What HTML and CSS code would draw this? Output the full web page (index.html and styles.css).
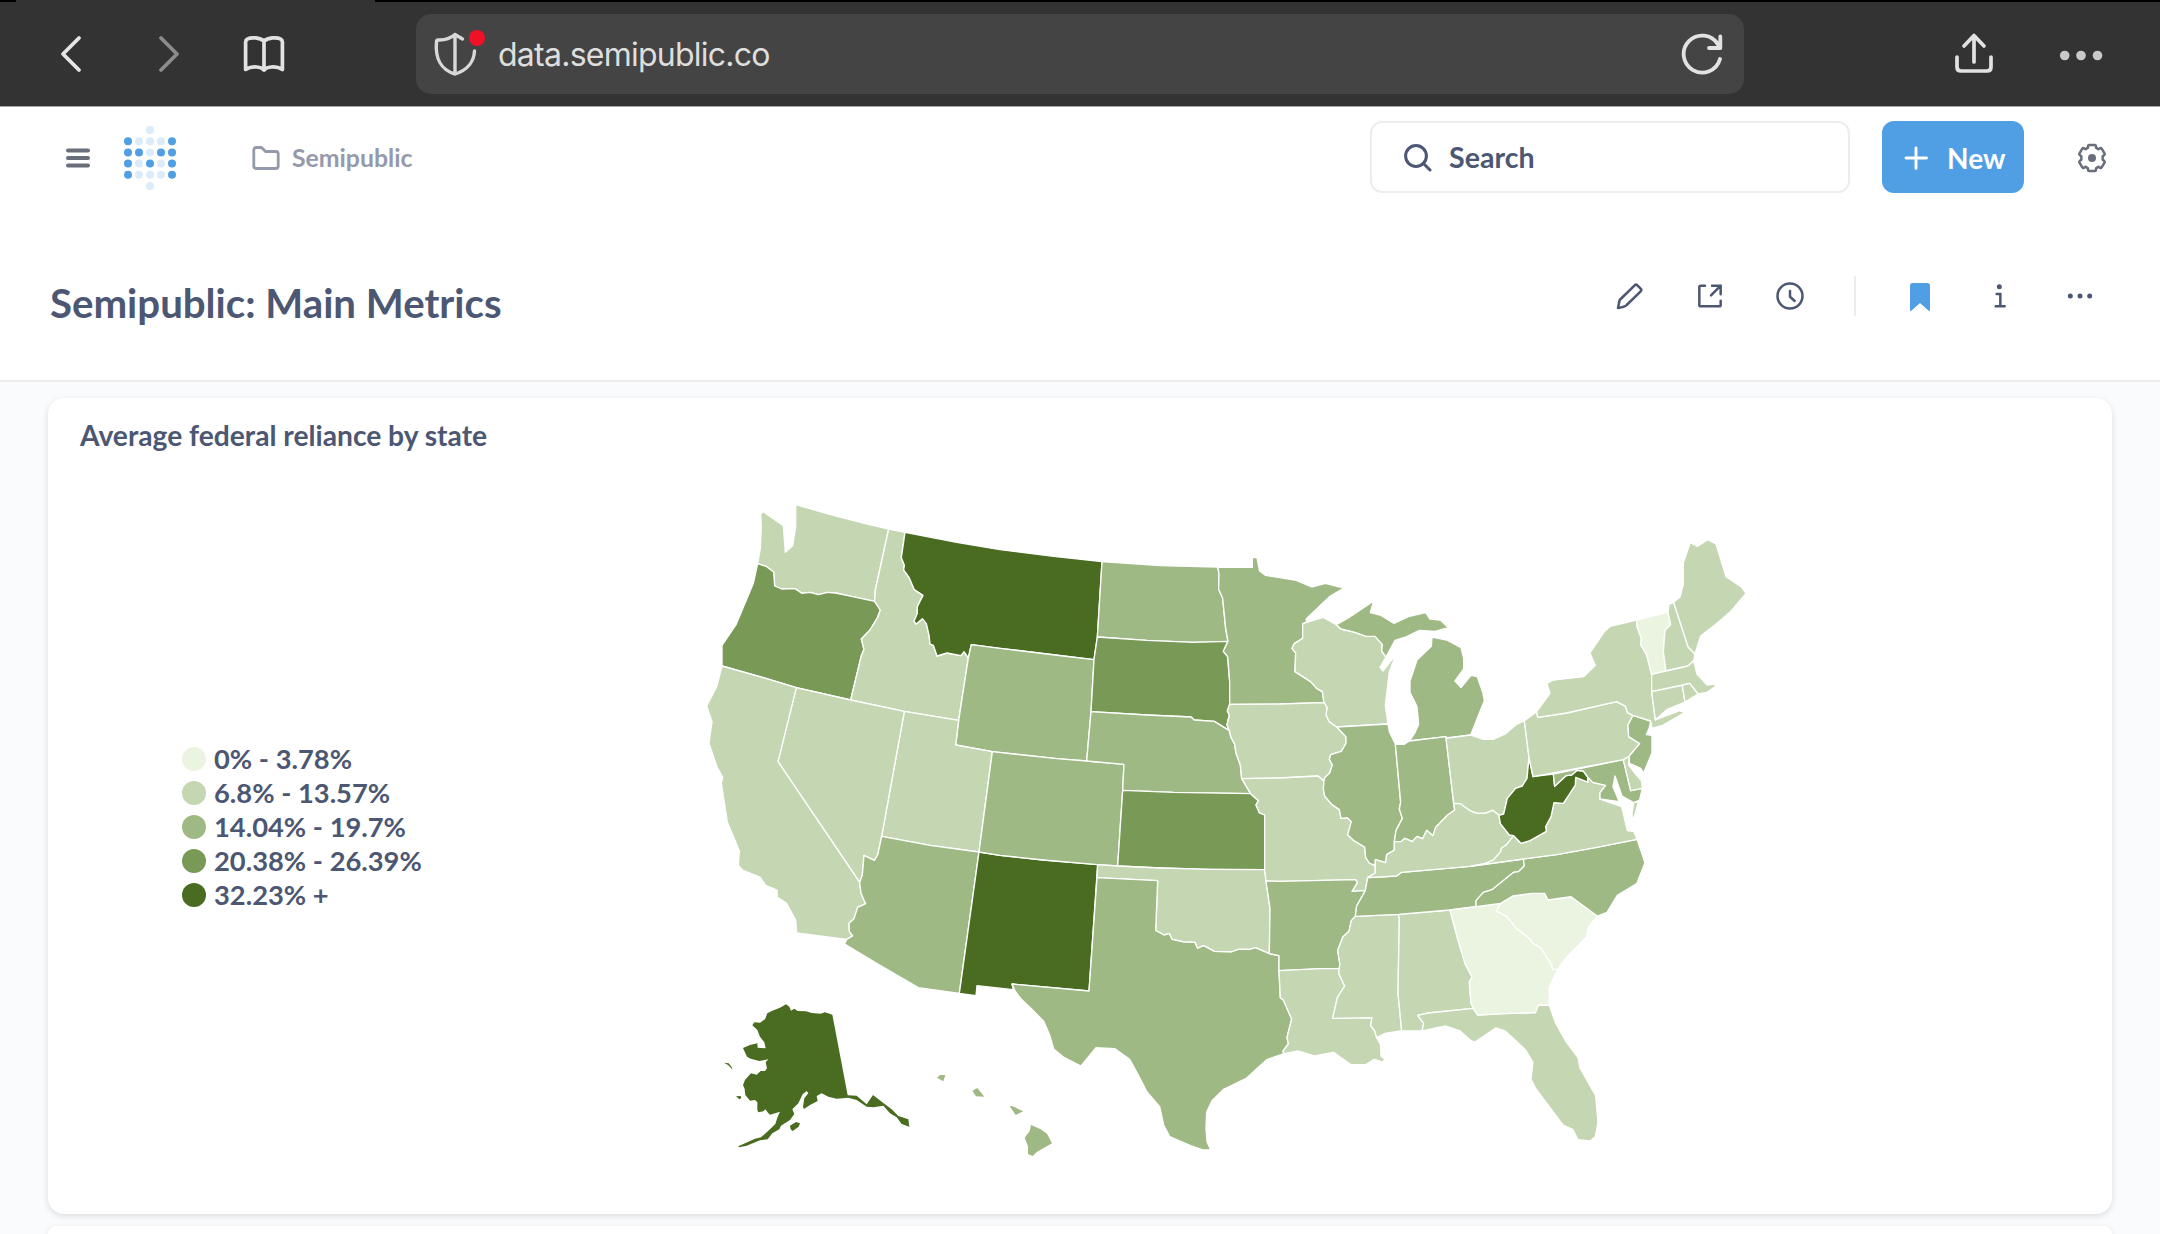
FILE: index.html
```
<!DOCTYPE html>
<html lang="en">
<head>
    <meta charset="UTF-8">
    <meta name="viewport" content="width=device-width, initial-scale=1.0">
    <title>Semipublic: Main Metrics</title>
    <link rel="stylesheet" href="styles.css">
</head>
<body>
    <!-- Browser toolbar -->
    <div class="tab-strip">
        <span class="tab-left"></span>
        <span class="tab-right"></span>
    </div>
    <div class="toolbar">
        <svg class="tool-icon back" viewBox="0 0 44 44" fill="none" stroke="#e6e6e6" stroke-width="3.8" stroke-linecap="round" stroke-linejoin="round"><path d="M30 6 14 22 30 38"/></svg>
        <svg class="tool-icon forward" viewBox="0 0 44 44" fill="none" stroke="#8c8c8c" stroke-width="3.8" stroke-linecap="round" stroke-linejoin="round"><path d="M14 6 30 22 14 38"/></svg>
        <svg class="tool-icon book" viewBox="0 0 44 44" fill="none" stroke="#e2e2e2" stroke-width="3.7" stroke-linejoin="round"><path d="M22 9C18 5.5 9 5 5.500 7Q3.600 8 3.600 10V37.500Q9 34 15 35 20 35.500 22 38 24 35.500 29 35 35 34 40.400 37.500V10Q40.400 8 38.500 7C35 5 26 5.500 22 9ZM22 9V38"/></svg>
        <div class="url-bar">
            <div class="shield">
                <svg viewBox="0 0 48 48" fill="none" stroke="#d8d8d8" stroke-width="3.4" stroke-linecap="round" stroke-linejoin="round"><path d="M29.500 9 22 4.500Q15 10.500 5 10Q3.500 10 3.500 12C2 28 8 40 22 44C35 40 41 31 41.500 21M22 4.500V44"/></svg>
                <span class="red-dot"></span>
            </div>
            <span class="url">data.semipublic.co</span>
            <svg class="reload" viewBox="0 0 44 44" fill="none" stroke="#e2e2e2" stroke-width="3.8" stroke-linecap="round" stroke-linejoin="round"><path d="M40 27A18.500 18.500 0 1 1 38 12.500L40 16M40.300 4.500V16H29"/></svg>
        </div>
        <svg class="tool-icon share" viewBox="0 0 44 44" fill="none" stroke="#e2e2e2" stroke-width="3.7" stroke-linecap="round" stroke-linejoin="round"><path d="M5 25V35Q5 39 9 39H35Q39 39 39 35V25M22 30V3.500M12 14 22 3.500 32 14"/></svg>
        <svg class="tool-icon more" viewBox="0 0 44 44" fill="#c9c9c9"><circle cx="5.700" cy="23.500" r="4.800"/><circle cx="22" cy="23.500" r="4.800"/><circle cx="38.500" cy="23.500" r="4.800"/></svg>
    </div>

    <!-- App navigation -->
    <header class="app-bar">
        <svg class="burger" viewBox="0 0 24 20" fill="none" stroke="#696e7b" stroke-width="4" stroke-linecap="round"><path d="M2 2.500H22M2 10H22M2 17.500H22"/></svg>
        <svg class="logo" viewBox="0 0 54 66">
            <g fill="#dbebf9">
                <circle cx="27" cy="5" r="4"/><circle cx="16" cy="16.200" r="4"/><circle cx="27" cy="16.200" r="4"/><circle cx="38" cy="16.200" r="4"/>
                <circle cx="27" cy="27.400" r="4"/><circle cx="16" cy="38.600" r="4"/><circle cx="38" cy="38.600" r="4"/>
                <circle cx="16" cy="49.800" r="4"/><circle cx="27" cy="49.800" r="4"/><circle cx="38" cy="49.800" r="4"/><circle cx="27" cy="61" r="4"/>
            </g>
            <g fill="#509ee3">
                <circle cx="5" cy="16.200" r="4"/><circle cx="49" cy="16.200" r="4"/>
                <circle cx="5" cy="27.400" r="4"/><circle cx="16" cy="27.400" r="4"/><circle cx="38" cy="27.400" r="4"/><circle cx="49" cy="27.400" r="4"/>
                <circle cx="5" cy="38.600" r="4"/><circle cx="27" cy="38.600" r="4"/><circle cx="49" cy="38.600" r="4"/>
                <circle cx="5" cy="49.800" r="4"/><circle cx="49" cy="49.800" r="4"/>
            </g>
        </svg>
        <a class="crumb">
            <svg viewBox="0 0 28 24" fill="none" stroke="#949aab" stroke-width="2.800" stroke-linejoin="round"><path d="M1.800 4Q1.800 1.500 4.300 1.500H9.500L13.500 5.500H23.700Q26.200 5.500 26.200 8V20Q26.200 22.500 23.700 22.500H4.300Q1.800 22.500 1.800 20Z"/></svg>
            <span>Semipublic</span>
        </a>
        <div class="search">
            <svg viewBox="0 0 28 28" fill="none" stroke="#4c5773" stroke-width="3" stroke-linecap="round"><circle cx="12" cy="12" r="10.400"/><path d="M19.500 19.500 26 26"/></svg>
            <span>Search</span>
        </div>
        <button class="new-button">
            <svg viewBox="0 0 24 24" fill="none" stroke="#fff" stroke-width="2.900" stroke-linecap="round"><path d="M12 2V22.500M2 12H22.500"/></svg>
            <span>New</span>
        </button>
        <svg class="gear" viewBox="0 0 90 90" fill="none" stroke="#696e7b" stroke-width="7.500" stroke-linejoin="round"><path d="M36 6H54Q57 6 57 10V14L65 19 69 16Q72 14 74 17L83 32Q84 35 81 37L77 40V50L81 53Q84 55 83 58L74 73Q72 76 69 74L65 71 57 76V80Q57 84 54 84H36Q33 84 33 80V76L25 71 21 74Q18 76 16 73L7 58Q6 55 9 53L13 50V40L9 37Q6 35 7 32L16 17Q18 14 21 16L25 19 33 14V10Q33 6 36 6Z"/><circle cx="45" cy="45" r="12" fill="#696e7b" stroke="none"/></svg>
    </header>

    <!-- Dashboard title and actions -->
    <div class="dash-header">
        <h1>Semipublic: Main Metrics</h1>
        <div class="actions">
            <svg viewBox="0 0 96 96" fill="none" stroke="#4c5773" stroke-width="7.500" stroke-linejoin="round"><path d="M12 84 17 60 62 16Q66 12 70 16L80 26Q84 30 80 34L38 75Q34 80 12 84Z"/></svg>
            <svg viewBox="0 0 96 96" fill="none" stroke="#4c5773" stroke-width="7.500" stroke-linecap="round" stroke-linejoin="round"><path d="M33 17H20Q16 17 16 21V75Q16 79 20 79H76Q80 79 80 75V62M54 17H80V43M80 17 51 46"/></svg>
            <svg viewBox="0 0 96 96" fill="none" stroke="#4c5773" stroke-width="7.500" stroke-linecap="round"><circle cx="48" cy="48" r="37.500"/><path d="M48 33V50L62 63"/></svg>
            <span class="divider"></span>
            <svg viewBox="0 0 96 96" fill="#509ee3"><path d="M18 17Q18 9 26 9H70Q78 9 78 17V90Q77 94 74 92L48 69 22 92Q19 94 18 90Z"/></svg>
            <svg viewBox="0 0 96 96" fill="none" stroke="#4c5773" stroke-width="7.500" stroke-linecap="round"><path d="M38 42H49V78M35 79H62"/><circle cx="46" cy="20" r="7.500" fill="#4c5773" stroke="none"/></svg>
            <svg viewBox="0 0 96 96" fill="#4c5773"><circle cx="19" cy="48" r="7.500"/><circle cx="48" cy="48" r="7.500"/><circle cx="77" cy="48" r="7.500"/></svg>
        </div>
    </div>

    <main class="dashboard">
        <section class="card">
            <h2>Average federal reliance by state</h2>
            <div class="chart">
                <ul class="legend">
                    <li><i class="dot level-1"></i>0% - 3.78%</li>
                    <li><i class="dot level-2"></i>6.8% - 13.57%</li>
                    <li><i class="dot level-3"></i>14.04% - 19.7%</li>
                    <li><i class="dot level-4"></i>20.38% - 26.39%</li>
                    <li><i class="dot level-5"></i>32.23% +</li>
                </ul>
                <svg class="us-map" viewBox="0 0 3180 2010">
                    <!-- West -->
                    <path class="level-2" data-state="WA" d="M212 72 220 65 280 107 286 187 308 167 317 110 317 44 430 76 520 99 596 117 556 300 554 334 470 316 437 309 413 307 385 314 360 307 336 310 315 296 275 297 254 288 251 246 228 229 203 221 211 175 214 110Z"/>
                    <path class="level-4" data-state="OR" d="M203 221 228 229 251 246 254 288 275 297 315 296 336 310 360 307 385 314 413 307 437 309 470 316 554 334 571 360 563 382 540 420 514 447 522 478 514 497 482 630 319 593 220 563 96 528 96 466 138 404 190 280Z"/>
                    <path class="level-2" data-state="ID" d="M596 117 645 127 634 203 643 226 641 240 657 262 673 299 699 316 682 350 682 370 672 394 679 402 697 386 709 401 717 435 720 462 730 466 741 498 771 489 813 497 822 485 835 504 806 691 643 664 482 630 514 497 522 478 514 447 540 420 563 382 571 360 554 334 556 300Z"/>
                    <path class="level-5" data-state="MT" d="M645 127 800 157 930 179 1090 199 1236 215 1222 441 1212 509 1120 498 930 475 844 464 835 504 822 485 813 497 771 489 741 498 730 466 720 462 717 435 709 401 697 386 679 402 672 394 682 370 682 350 699 316 673 299 657 262 641 240 643 226 634 203Z"/>
                    <path class="level-3" data-state="WY" d="M844 464 930 475 1120 498 1212 509 1203 665 1190 813 1100 806 907 785 797 765 806 691 835 504Z"/>
                    <path class="level-2" data-state="UT" d="M643 664 806 691 797 765 907 785 867 1086 720 1066 575 1039Z"/>
                    <path class="level-2" data-state="NV" d="M319 593 482 630 643 664 575 1039 563 1095 553 1111 522 1096 517 1155 509 1177 264 815Z"/>
                    <path class="level-2" data-state="CA" d="M96 528 220 563 319 593 264 815 509 1177 513 1210 527 1241 503 1252 492 1286 477 1300 478 1324 488 1338 470 1348 320 1329 317 1290 289 1239 262 1222 261 1200 227 1186 210 1161 157 1140 145 1126 148 1083 112 996 94 880 98 862 81 831 57 760 66 695 50 648 80 590Z"/>
                    <path class="level-3" data-state="AZ" d="M575 1039 720 1066 867 1086 808 1510 685 1493 560 1420 464 1362 470 1348 488 1338 478 1324 477 1300 492 1286 503 1252 527 1241 513 1210 509 1177 517 1155 522 1096 553 1111 563 1095Z"/>
                    <path class="level-5" data-state="NM" d="M867 1086 930 1096 1060 1110 1223 1124 1197 1503 966 1482 970 1499 861 1487 858 1517 808 1510Z"/>
                    <path class="level-3" data-state="CO" d="M907 785 1100 806 1190 813 1302 823 1298 901 1283 1128 1223 1124 1060 1110 930 1096 867 1086Z"/>
                    <!-- Plains -->
                    <path class="level-3" data-state="ND" d="M1236 215 1410 227 1583 231 1587 250 1586 298 1598 325 1607 415 1614 454 1510 457 1370 451 1222 441Z"/>
                    <path class="level-4" data-state="SD" d="M1222 441 1370 451 1510 457 1614 454 1600 484 1613 500 1619 575 1619 643 1612 663 1618 675 1611 705 1618 722 1573 694 1513 690 1503 681 1370 675 1203 665 1212 509Z"/>
                    <path class="level-3" data-state="NE" d="M1203 665 1370 675 1503 681 1513 690 1573 694 1618 722 1623 742 1634 762 1638 790 1651 825 1655 866 1682 911 1450 907 1298 901 1302 823 1190 813Z"/>
                    <path class="level-4" data-state="KS" d="M1298 901 1450 907 1682 911 1705 932 1698 945 1708 968 1724 975 1724 1139 1560 1138 1410 1134 1283 1128Z"/>
                    <path class="level-2" data-state="OK" d="M1223 1124 1283 1128 1410 1134 1560 1138 1724 1139 1728 1173 1740 1255 1738 1391 1696 1373 1680 1378 1645 1378 1624 1386 1573 1384 1541 1367 1522 1375 1515 1357 1482 1356 1446 1348 1438 1331 1422 1335 1397 1321 1403 1172 1221 1163Z"/>
                    <path class="level-3" data-state="TX" d="M1221 1163 1403 1172 1397 1321 1422 1335 1438 1331 1446 1348 1482 1356 1515 1357 1522 1375 1541 1367 1573 1384 1624 1386 1645 1378 1680 1378 1696 1373 1738 1391 1767 1397 1767 1442 1771 1523 1780 1530 1805 1587 1791 1642 1795 1662 1779 1683 1782 1691 1730 1709 1670 1764 1601 1798 1566 1832 1550 1866 1548 1915 1551 1955 1562 1979 1538 1980 1500 1966 1439 1940 1421 1905 1409 1850 1371 1806 1345 1755 1319 1708 1274 1676 1218 1673 1173 1728 1123 1703 1091 1677 1079 1635 1061 1594 1025 1557 994 1528 975 1503 966 1482 1197 1503Z"/>
                    <!-- Midwest -->
                    <path class="level-3" data-state="MN" d="M1583 231 1687 232 1687 203 1701 203 1709 243 1726 256 1815 270 1865 291 1906 280 1962 294 1920 319 1849 386 1849 397 1838 401 1838 445 1813 461 1806 475 1817 489 1815 545 1862 575 1880 595 1897 605 1902 638 1770 642 1619 643 1619 575 1613 500 1600 484 1614 454 1607 415 1598 325 1586 298 1587 250Z"/>
                    <path class="level-2" data-state="WI" d="M1838 401 1900 382 1939 404 1953 417 1995 427 2028 439 2055 439 2077 463 2075 483 2088 501 2070 532 2079 543 2118 493 2098 545 2086 645 2094 702 1940 711 1917 695 1908 675 1911 652 1902 638 1897 605 1880 595 1862 575 1815 545 1817 489 1806 475 1813 461 1838 445Z"/>
                    <path class="level-3" data-state="MI" d="M1939 404 1975 384 2051 333 2041 368 2073 376 2112 400 2155 380 2207 368 2220 387 2251 390 2275 413 2235 424 2188 421 2150 440 2115 451 2088 501 2075 483 2077 463 2055 439 2028 439 1995 427 1953 417ZM2226 441 2270 450 2313 473 2321 505 2321 537 2295 573 2313 593 2343 556 2362 560 2379 610 2383 632 2342 735 2268 744 2268 740 2158 753 2174 730 2186 703 2181 650 2160 607 2160 573 2181 510 2224 469Z"/>
                    <path class="level-2" data-state="IA" d="M1619 643 1770 642 1902 638 1911 652 1908 675 1917 695 1940 711 1968 740 1968 760 1954 784 1922 794 1918 808 1927 825 1919 849 1904 863 1902 873 1884 858 1770 864 1655 866 1651 825 1638 790 1634 762 1623 742 1618 722 1611 705 1618 675 1612 663Z"/>
                    <path class="level-2" data-state="MO" d="M1655 866 1770 864 1884 858 1902 873 1900 897 1904 918 1925 943 1948 959 1953 985 1972 983 1984 995 1973 1034 1992 1052 2024 1071 2027 1102 2038 1119 2055 1127 2056 1149 2033 1163 2026 1202 1986 1204 2002 1178 1997 1169 1770 1174 1728 1173 1724 1139 1724 975 1708 968 1698 945 1705 932 1682 911Z"/>
                    <path class="level-3" data-state="IL" d="M1940 711 2094 702 2098 725 2116 762 2132 937 2128 957 2137 985 2118 1022 2113 1055 2113 1080 2090 1094 2087 1118 2056 1109 2055 1127 2038 1119 2027 1102 2024 1071 1992 1052 1973 1034 1984 995 1972 983 1953 985 1948 959 1925 943 1904 918 1900 897 1902 873 1904 863 1919 849 1927 825 1918 808 1922 794 1954 784 1968 760 1968 740Z"/>
                    <path class="level-3" data-state="IN" d="M2116 762 2142 763 2158 753 2268 740 2291 940 2294 960 2273 975 2237 1012 2229 1037 2210 1021 2198 1046 2181 1039 2167 1055 2145 1045 2133 1055 2113 1055 2118 1022 2137 985 2128 957 2132 937Z"/>
                    <path class="level-2" data-state="OH" d="M2268 745 2342 735 2380 748 2410 748 2446 732 2477 705 2503 692 2517 803 2511 865 2497 888 2477 895 2452 925 2441 972 2427 976 2408 961 2385 970 2360 970 2340 962 2311 941 2291 940Z"/>
                    <!-- South -->
                    <path class="level-3" data-state="AR" d="M1728 1173 1770 1174 1997 1169 2002 1178 1986 1204 2026 1202 2000 1248 1996 1279 1984 1292 1977 1324 1959 1340 1943 1381 1950 1425 1947 1436 1895 1436 1767 1442 1767 1397 1738 1391 1740 1255Z"/>
                    <path class="level-2" data-state="LA" d="M1767 1442 1895 1436 1947 1436 1947 1452 1964 1488 1942 1523 1928 1585 2046 1583 2042 1607 2054 1623 2060 1643 2072 1665 2073 1698 2085 1709 2077 1716 2052 1708 2028 1724 1981 1723 1931 1687 1873 1698 1824 1683 1782 1691 1779 1683 1795 1662 1791 1642 1805 1587 1780 1530 1771 1523Z"/>
                    <path class="level-2" data-state="MS" d="M1996 1279 2125 1273 2128 1285 2124 1510 2135 1622 2085 1630 2060 1643 2054 1623 2042 1607 2046 1583 1928 1585 1942 1523 1964 1488 1947 1452 1947 1436 1950 1425 1943 1381 1959 1340 1977 1324 1984 1292Z"/>
                    <path class="level-2" data-state="AL" d="M2125 1273 2280 1260 2301 1340 2326 1423 2346 1460 2338 1477 2343 1540 2350 1555 2215 1569 2183 1576 2201 1600 2196 1623 2135 1622 2124 1510 2128 1285Z"/>
                    <path class="level-3" data-state="TN" d="M2033 1163 2120 1158 2135 1147 2340 1129 2500 1107 2503 1128 2485 1145 2471 1147 2406 1199 2380 1207 2358 1232 2358 1250 2280 1260 2125 1273 1996 1279 2000 1248 2026 1202Z"/>
                    <path class="level-2" data-state="KY" d="M2033 1163 2120 1158 2135 1147 2340 1129 2384 1121 2410 1110 2430 1088 2435 1074 2450 1064 2471 1037 2458 1035 2431 1001 2427 976 2408 961 2385 970 2360 970 2340 962 2311 941 2291 940 2294 960 2273 975 2237 1012 2229 1037 2210 1021 2198 1046 2181 1039 2167 1055 2145 1045 2133 1055 2113 1055 2113 1080 2090 1094 2087 1118 2056 1109 2056 1149Z"/>
                    <path class="level-2" data-state="FL" d="M2350 1555 2363 1575 2440 1571 2536 1568 2545 1545 2578 1546 2596 1597 2628 1655 2664 1703 2670 1734 2717 1817 2724 1896 2716 1940 2700 1953 2664 1949 2648 1918 2620 1906 2538 1797 2523 1768 2529 1717 2506 1679 2446 1623 2417 1614 2355 1656 2343 1652 2310 1623 2266 1608 2196 1623 2201 1600 2183 1576 2215 1569Z"/>
                    <path class="level-1" data-state="GA" d="M2280 1260 2358 1250 2432 1240 2419 1263 2451 1280 2477 1313 2520 1347 2530 1361 2553 1374 2585 1425 2588 1437 2602 1439 2578 1492 2578 1546 2545 1545 2536 1568 2440 1571 2363 1575 2350 1555 2343 1540 2338 1477 2346 1460 2326 1423 2301 1340Z"/>
                    <path class="level-1" data-state="SC" d="M2432 1240 2468 1218 2525 1210 2564 1210 2574 1230 2643 1220 2722 1278 2694 1313 2690 1340 2627 1405 2602 1439 2588 1437 2585 1425 2553 1374 2530 1361 2520 1347 2477 1313 2451 1280 2419 1263Z"/>
                    <path class="level-3" data-state="NC" d="M2358 1250 2358 1232 2380 1207 2406 1199 2471 1147 2485 1145 2503 1128 2500 1107 2600 1094 2720 1072 2841 1048 2865 1118 2840 1181 2782 1216 2751 1267 2722 1278 2643 1220 2574 1230 2564 1210 2525 1210 2468 1218 2432 1240Z"/>
                    <path class="level-2" data-state="VA" d="M2340 1129 2384 1121 2410 1110 2430 1088 2435 1074 2450 1064 2471 1037 2493 1060 2520 1052 2569 1024 2567 1010 2583 980 2592 938 2620 940 2656 885 2657 862 2693 876 2693 861 2708 877 2747 886 2730 908 2730 927 2795 950 2812 1022 2832 1025 2841 1048 2720 1072 2600 1094 2500 1107ZM2831 938 2846 934 2828 996 2826 970Z"/>
                    <path class="level-5" data-state="WV" d="M2517 803 2529 860 2590 852 2594 889 2628 857 2645 855 2661 841 2680 843 2693 861 2693 876 2657 862 2656 885 2620 940 2592 938 2583 980 2567 1010 2569 1024 2520 1052 2493 1060 2471 1037 2458 1035 2431 1001 2427 976 2441 972 2452 925 2477 895 2497 888 2511 865Z"/>
                    <path class="level-3" data-state="MD" d="M2590 852 2800 809 2822 902 2857 895 2849 930 2831 938 2796 918 2775 858 2769 890 2788 935 2750 930 2730 927 2730 908 2747 886 2708 877 2693 861 2680 843 2661 841 2645 855 2628 857 2594 889Z"/>
                    <path class="level-2" data-state="DE" d="M2800 809 2818 798 2816 825 2835 850 2855 873 2857 895 2822 902Z"/>
                    <!-- Northeast -->
                    <path class="level-2" data-state="PA" d="M2503 692 2540 665 2543 682 2630 669 2780 635 2807 649 2812 668 2829 676 2814 705 2816 740 2849 761 2818 798 2800 809 2529 860 2517 803Z"/>
                    <path class="level-3" data-state="NJ" d="M2829 676 2882 693 2878 713 2869 734 2886 736 2886 788 2861 849 2852 835 2818 820 2818 798 2849 761 2816 740 2814 705Z"/>
                    <path class="level-2" data-state="NY" d="M2540 665 2580 610 2571 580 2590 570 2681 560 2716 526 2700 489 2743 425 2761 409 2840 390 2841 410 2854 445 2852 463 2870 495 2885 553 2885 605 2896 690 2969 662 2984 668 2918 706 2886 715 2882 693 2829 676 2812 668 2807 649 2780 635 2630 669 2543 682Z"/>
                    <path class="level-1" data-state="VT" d="M2840 390 2934 366 2942 404 2925 421 2920 485 2928 543 2885 553 2870 495 2852 463 2854 445 2841 410Z"/>
                    <path class="level-2" data-state="NH" d="M2934 366 2937 343 2951 337 2994 470 3015 492 3011 512 2994 528 2928 543 2920 485 2925 421 2942 404Z"/>
                    <path class="level-2" data-state="ME" d="M2951 337 2970 321 2980 282 2980 218 3001 157 3022 169 3053 149 3078 162 3108 260 3154 291 3168 310 3124 362 3085 397 3032 438 3015 492 2994 470Z"/>
                    <path class="level-2" data-state="MA" d="M2885 553 2928 543 2994 528 3011 512 3021 552 3051 585 3073 582 3078 588 3051 607 3024 612 2999 580 2885 605Z"/>
                    <path class="level-2" data-state="CT" d="M2885 605 2977 586 2985 636 2932 658 2896 690Z"/>
                    <path class="level-2" data-state="RI" d="M2977 586 2999 580 3024 612 2985 636Z"/>
                    <!-- Alaska and Hawaii -->
                    <g class="inset" transform="translate(30 1470)">
                        <path class="level-5" data-state="AK" d="M258 73 268 80 273 92 283 86 293 93 318 94 335 99 362 101 375 97 397 104 443 346 470 347 500 373 519 345 553 371 575 388 595 408 625 418 628 440 605 432 590 412 570 400 550 377 520 382 500 380 470 360 445 353 410 356 385 350 365 340 350 348 353 363 330 375 312 387 309 380 313 355 325 340 320 333 308 343 295 370 277 388 283 402 270 420 243 437 238 448 217 460 203 478 180 481 140 497 117 502 115 499 165 476 183 472 205 452 226 432 233 410 240 395 225 400 210 404 204 398 196 388 190 394 175 397 172 390 172 367 165 360 150 362 136 345 134 327 129 315 135 300 153 280 170 284 182 273 195 273 201 265 197 247 205 238 178 243 152 236 141 230 129 204 150 195 172 190 173 203 197 205 193 187 180 170 172 150 157 136 163 127 180 128 195 118 202 100 215 93 240 83ZM270 437 288 426 300 430 296 440 278 453 272 448ZM108 349 122 348 124 354 118 358ZM72 248 86 250 97 264 96 267 84 255Z"/>
                        <path class="level-3" data-state="HI" d="M711 293 720 285 736 285 730 304ZM817 332 832 324 853 350 828 349ZM929 378 938 379 970 394 947 405ZM993 435 1022 448 1041 461 1056 490 1010 516 998 528 984 522 984 499 974 473 989 454Z"/>
                    </g>
                </svg>
            </div>
        </section>
        <section class="card next-card"></section>
    </main>
</body>
</html>
```
FILE: styles.css
```
body {
    font-family: 'Lato', sans-serif;
    background-color: #f9fbfc;
    color: #4c5773;
    margin: 0;
}

* {
    box-sizing: border-box;
}

svg {
    display: block;
    flex: none;
}

/* Browser toolbar */
.tab-strip {
    display: flex;
    justify-content: space-between;
    height: 2px;
    background-color: #333333;
}

.tab-left {
    width: 16px;
    background-color: #000000;
}

.tab-right {
    width: 1785px;
    background-color: #000000;
}

.toolbar {
    display: flex;
    align-items: center;
    height: 105px;
    padding-left: 49px;
    background-color: #333333;
    border-bottom: 1px solid #a8a8a8;
}

.tool-icon {
    width: 44px;
    height: 44px;
}

.forward {
    margin-left: 54px;
}

.book {
    margin-left: 51px;
}

.url-bar {
    display: flex;
    align-items: center;
    width: 1328px;
    height: 80px;
    margin-left: 130px;
    padding: 0 20px 0 17px;
    background-color: #444444;
    border-radius: 15px;
}

.shield {
    position: relative;
    margin-right: 17px;
}

.shield svg {
    width: 48px;
    height: 48px;
}

.red-dot {
    position: absolute;
    top: 0;
    right: -4px;
    width: 16px;
    height: 16px;
    border-radius: 50%;
    background-color: #f01126;
}

.url {
    font-family: 'Inter', sans-serif;
    font-size: 32px;
    letter-spacing: -0.75px;
    color: #dedede;
}

.reload {
    width: 44px;
    height: 44px;
    margin-left: auto;
}

.share {
    margin-left: 208px;
}

.more {
    margin-left: 63px;
}

/* App navigation */
.app-bar {
    display: flex;
    align-items: center;
    height: 102px;
    padding-left: 66px;
    background-color: #ffffff;
}

.burger {
    width: 24px;
    height: 20px;
}

.logo {
    width: 54px;
    height: 66px;
    margin-left: 33px;
}

.crumb {
    display: flex;
    align-items: center;
    gap: 12px;
    margin-left: 75px;
    font-size: 24.8px;
    font-weight: bold;
    color: #949aab;
}

.crumb span {
    padding-bottom: 2px;
}

.crumb svg {
    width: 28px;
    height: 24px;
}

.search {
    display: flex;
    align-items: center;
    gap: 17px;
    width: 480px;
    height: 72px;
    margin: 0 0 2px auto;
    padding-left: 32px;
    border: 2px solid #eeecec;
    border-radius: 12px;
    font-size: 28.6px;
    font-weight: bold;
}

.search span {
    padding-bottom: 1px;
}

.search svg {
    width: 28px;
    height: 28px;
    margin-top: 2px;
}

.new-button {
    display: flex;
    align-items: center;
    gap: 19px;
    width: 142px;
    height: 72px;
    margin: 0 53px 2px 32px;
    padding: 2px 0 0 22px;
    background-color: #509ee3;
    color: #ffffff;
    border: none;
    border-radius: 12px;
    font-family: 'Lato', sans-serif;
    font-size: 28px;
    font-weight: bold;
}

.new-button svg {
    width: 24px;
    height: 24px;
}

.gear {
    width: 30px;
    height: 30px;
    margin-right: 53px;
}

/* Dashboard title */
.dash-header {
    display: flex;
    justify-content: space-between;
    height: 173px;
    padding: 66px 64px 0 50px;
    background-color: #ffffff;
    border-bottom: 2px solid #eeecec;
}

.dash-header h1 {
    margin: 3px 0 0;
    font-size: 40.2px;
    line-height: 50px;
}

.actions {
    display: flex;
    align-items: center;
    gap: 48px;
    height: 42px;
}

.actions svg {
    width: 32px;
    height: 32px;
}

.divider {
    width: 2px;
    height: 40px;
    background-color: #eeecec;
}

/* Cards */
.dashboard {
    display: flex;
    flex-direction: column;
    gap: 12px;
    height: 852px;
    padding: 16px 48px 0;
}

.card {
    height: 816px;
    flex: none;
    padding: 19px 32px;
    background-color: #ffffff;
    border-radius: 16px;
    box-shadow: 0 2px 6px rgba(0, 0, 0, 0.13);
}

.next-card {
    flex: 1;
    padding: 0;
    border-radius: 16px 16px 0 0;
}

.card h2 {
    margin: 0;
    font-size: 28.2px;
    line-height: 36px;
}

.chart {
    display: flex;
    padding: 37px 0 0 102px;
}

.legend {
    width: 508px;
    margin: 252px 0 0;
    padding: 0;
    list-style: none;
    font-size: 27.3px;
    font-weight: bold;
    line-height: 34px;
}

.legend li {
    display: flex;
    align-items: center;
    gap: 8px;
}

.dot {
    width: 24px;
    height: 24px;
    border-radius: 50%;
}

/* Map */
.us-map {
    width: 1060px;
    height: 670px;
}

.us-map path {
    stroke: #ffffff;
    stroke-width: 4;
    stroke-linejoin: round;
}

.us-map .inset path {
    stroke: none;
}

.level-1 { background-color: #ebf4e0; fill: #ebf4e0; }
.level-2 { background-color: #c5d6b2; fill: #c5d6b2; }
.level-3 { background-color: #9eb984; fill: #9eb984; }
.level-4 { background-color: #799957; fill: #799957; }
.level-5 { background-color: #496c21; fill: #496c21; }
```
